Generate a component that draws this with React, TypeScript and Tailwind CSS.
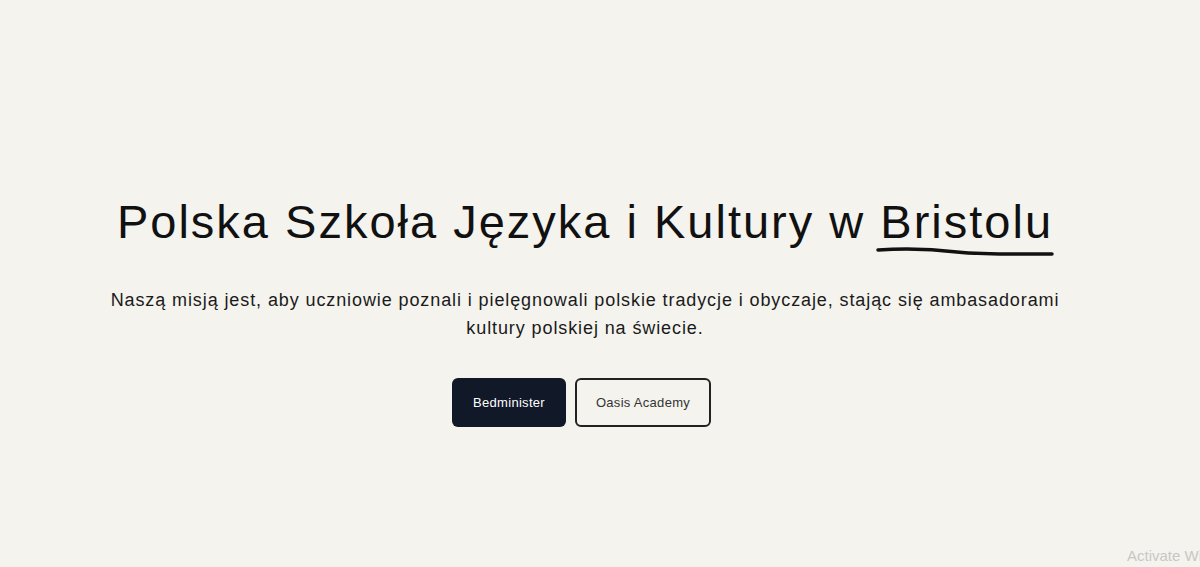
import React from "react";

export default function App() {
  return (
    <main
      className="relative h-[567px] w-full overflow-hidden bg-[#f4f3ee] text-[#111111]"
      style={{ fontFamily: '"Liberation Sans", Arial, sans-serif' }}
    >
      <div className="flex flex-col items-center pr-[30px] pt-[190px]">
        <h1 className="whitespace-nowrap text-[47px] font-normal leading-[64px] tracking-[2px]">
          Polska Szkoła Języka i Kultury w{" "}
          <span className="relative inline-block">
            Bristolu
            <svg
              className="absolute left-[-4px] top-[56px] h-[12px] w-[178px]"
              viewBox="0 0 176 12"
              preserveAspectRatio="none"
            >
              <path
                d="M2 4 C 30 2, 55 3, 80 6 C 110 9, 150 8, 174 8"
                stroke="#111"
                strokeWidth="3.5"
                fill="none"
                strokeLinecap="round"
              />
            </svg>
          </span>
        </h1>

        <p className="mt-[32px] whitespace-nowrap text-center text-[18px] leading-[28px] tracking-[0.9px] text-[#1a1a1a]">
          Naszą misją jest, aby uczniowie poznali i pielęgnowali polskie tradycje i obyczaje, stając się ambasadorami
          <br />
          kultury polskiej na świecie.
        </p>

        <div className="mt-[36px] flex gap-[9px] pr-[7px]">
          <button className="h-[49px] w-[114px] rounded-[6px] bg-[#111827] text-[13px] tracking-[0.3px] text-white">
            Bedminister
          </button>
          <button className="h-[49px] w-[136px] rounded-[6px] border-2 border-[#222] bg-transparent text-[13px] tracking-[0.3px] text-[#333]">
            Oasis Academy
          </button>
        </div>
      </div>

      <div className="absolute bottom-[0px] left-[1127px] whitespace-nowrap text-[15px] text-[#c8c8c4]">
        Activate Windows
      </div>
    </main>
  );
}
